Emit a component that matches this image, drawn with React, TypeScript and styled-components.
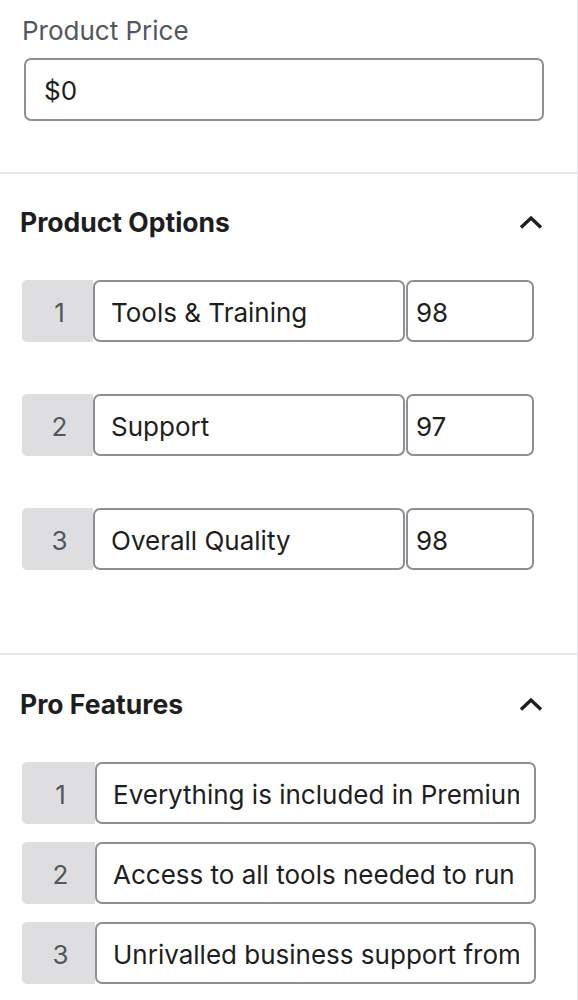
import React from "react";
import styled, { createGlobalStyle } from "styled-components";

const Global = createGlobalStyle`
  html, body { margin: 0; padding: 0; background: #fff; }
  body { font-family: Inter, "Noto Sans", Roboto, sans-serif; -webkit-font-smoothing: antialiased; }
  * { box-sizing: border-box; }
`;

const Panel = styled.div`
  width: 578px;
  min-height: 1000px;
  border-right: 1px solid #e2e4e7;
  background: #fff;
`;

const PriceSection = styled.section`
  padding: 16px 0 51px 24px;
  display: flex;
  flex-direction: column;
  gap: 12px;
`;

const Label = styled.label`
  font-size: 26px;
  line-height: 30px;
  color: #50575e;
  margin-left: -2px;
`;

const TextField = styled.input<{ $w: number }>`
  width: ${(p) => p.$w}px;
  height: 63px;
  border: 2px solid #8c8f94;
  border-radius: 7px;
  padding: 2px 16px 0 18px;
  font-family: inherit;
  font-size: 26px;
  color: #1e1e1e;
  background: #fff;
  outline: none;
`;

const Section = styled.section<{ $top: number; $bottom: number }>`
  border-top: 2px solid #e8e8e8;
  padding: ${(p) => p.$top}px 0 ${(p) => p.$bottom}px 0;
`;

const Header = styled.div<{ $mb: number }>`
  display: flex;
  align-items: center;
  justify-content: space-between;
  padding: 0 34px 0 20px;
  margin-bottom: ${(p) => p.$mb}px;
`;

const Heading = styled.h2`
  margin: 0;
  font-size: 26.5px;
  line-height: 30px;
  font-weight: 700;
  color: #1e1e1e;
`;

const Rows = styled.div<{ $gap: number }>`
  display: flex;
  flex-direction: column;
  gap: ${(p) => p.$gap}px;
  padding-left: 22px;
`;

const Row = styled.div`
  display: flex;
  align-items: stretch;
  height: 62px;
`;

const Index = styled.div<{ $w: number }>`
  width: ${(p) => p.$w}px;
  flex: none;
  background: #dedee0;
  border-radius: 5px 0 0 5px;
  display: flex;
  align-items: center;
  justify-content: center;
  padding: 2px 0 0 4px;
  font-size: 26px;
  color: #50575e;
`;

const ItemInput = styled.input<{ $w: number }>`
  width: ${(p) => p.$w}px;
  height: 62px;
  flex: none;
  border: 2px solid #8c8f94;
  border-radius: 7px;
  padding: 2px 15px 0 16px;
  font-family: inherit;
  font-size: 26px;
  color: #1e1e1e;
  background: #fff;
  outline: none;
`;

const ScoreInput = styled(ItemInput)`
  margin-left: 1px;
  padding: 2px 8px 0 8px;
`;

const Chevron = () => (
  <svg width="24" height="14" viewBox="0 0 24 14" fill="none">
    <polyline points="2,12.5 12,3 22,12.5" stroke="#1e1e1e" strokeWidth="3.4" strokeLinecap="butt" strokeLinejoin="miter" />
  </svg>
);

const options = [
  { n: 1, label: "Tools & Training", score: "98" },
  { n: 2, label: "Support", score: "97" },
  { n: 3, label: "Overall Quality", score: "98" },
];

const features = [
  "Everything is included in Premium",
  "Access to all tools needed to run your business",
  "Unrivalled business support from our team",
];

export default function App() {
  return (
    <>
      <Global />
      <Panel>
        <PriceSection>
          <Label>Product Price</Label>
          <TextField $w={520} readOnly value="$0" />
        </PriceSection>

        <Section $top={33} $bottom={83}>
          <Header $mb={43}>
            <Heading>Product Options</Heading>
            <Chevron />
          </Header>
          <Rows $gap={52}>
            {options.map((o) => (
              <Row key={o.n}>
                <Index $w={71}>{o.n}</Index>
                <ItemInput $w={312} readOnly value={o.label} />
                <ScoreInput $w={128} readOnly value={o.score} />
              </Row>
            ))}
          </Rows>
        </Section>

        <Section $top={34} $bottom={20}>
          <Header $mb={43}>
            <Heading>Pro Features</Heading>
            <Chevron />
          </Header>
          <Rows $gap={18}>
            {features.map((f, i) => (
              <Row key={i}>
                <Index $w={73}>{i + 1}</Index>
                <ItemInput $w={441} readOnly value={f} />
              </Row>
            ))}
          </Rows>
        </Section>
      </Panel>
    </>
  );
}
